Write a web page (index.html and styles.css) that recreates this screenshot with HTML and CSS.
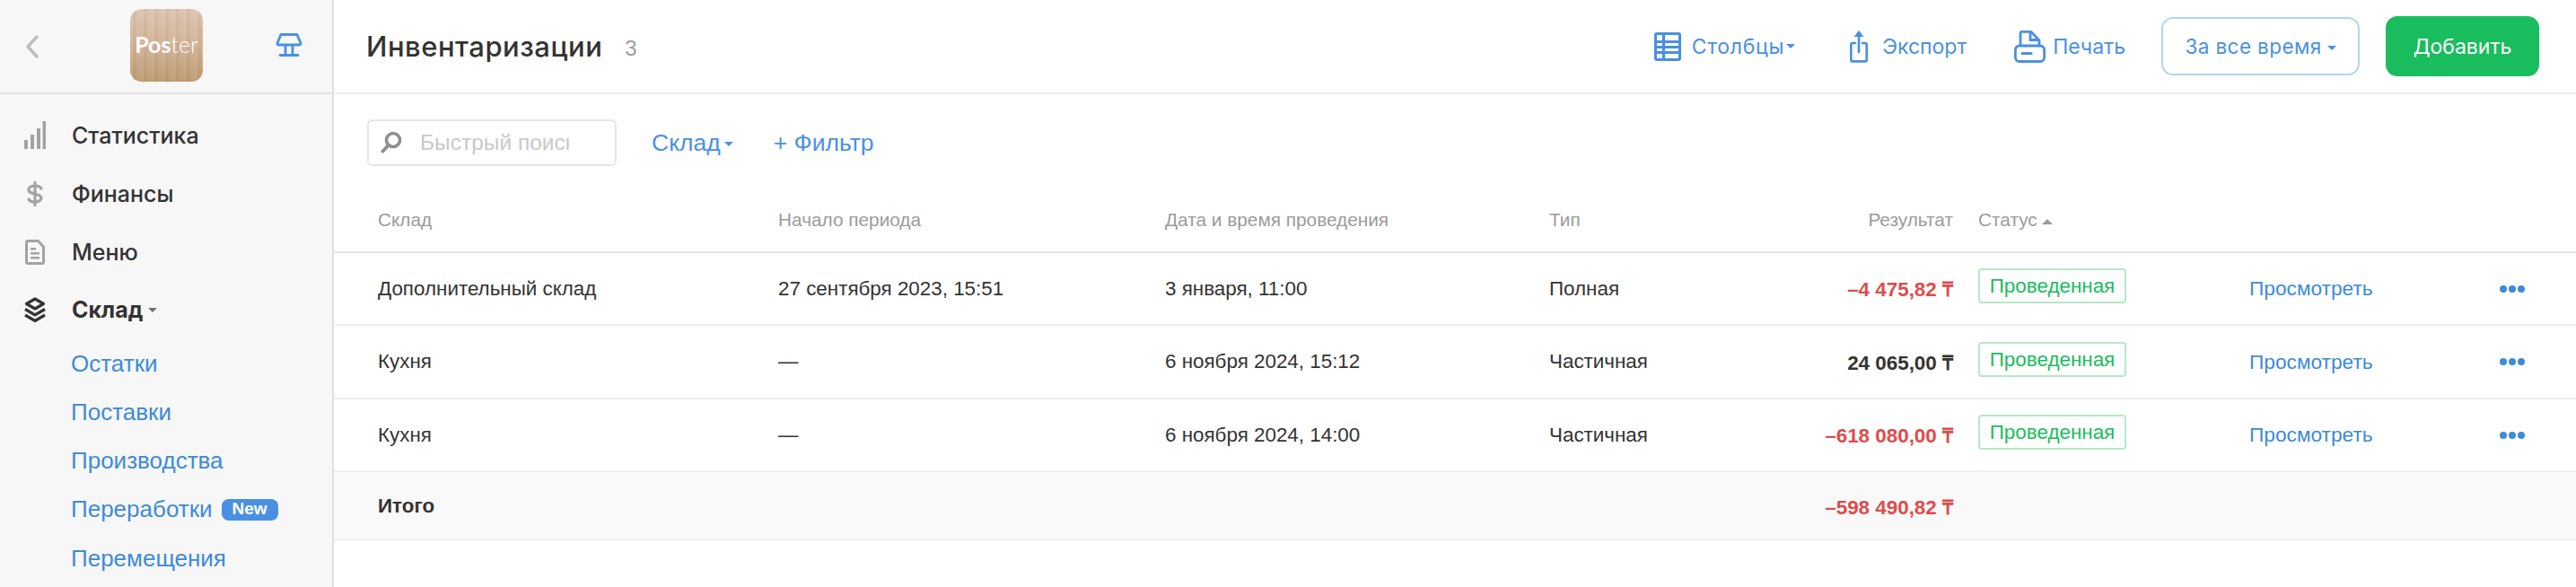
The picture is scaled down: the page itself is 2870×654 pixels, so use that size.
FILE: index.html
```html
<!DOCTYPE html>
<html lang="ru">
<head>
    <meta charset="UTF-8">
    <title>Инвентаризации</title>
    <link rel="stylesheet" href="styles.css">
</head>
<body>
    <div class="app">
        <!-- Sidebar -->
        <aside class="sidebar">
            <div class="brand">
                <svg class="back-icon" width="16" height="26" viewBox="0 0 16 26"><path d="M13 2 3 13l10 11" fill="none" stroke="#bdbdbd" stroke-width="3.4" stroke-linecap="round" stroke-linejoin="round"/></svg>
                <div class="logo"><b>Pos</b>ter</div>
                <svg class="pos-icon" width="30" height="26" viewBox="0 0 30 26"><path d="M6 1.500h18l4 9.500q.3 2-1.500 2H3.500q-1.800 0-1.500-2zM11 13v11M19 13v11M5 24.500h20" fill="none" stroke="#4a90e2" stroke-width="2.800" stroke-linejoin="round" stroke-linecap="round"/></svg>
            </div>
            <nav class="nav">
                <a class="nav-item">
                    <svg class="nav-icon" width="24" height="32" viewBox="0 0 24 32"><path d="M0 21h4v10H0zM7 15h4v16H7zM14 8h4v23h-4zM20.500 0h3.500v31h-3.500z" fill="#a3a3a3"/></svg>
                    Статистика
                </a>
                <a class="nav-item">
                    <svg class="nav-icon" width="24" height="28" viewBox="0 0 24 28"><path d="M19 8c-1-2-3.500-3-7-3-4 0-7 1.500-7 4.500S8 13 12 14s7 2 7 4.500-3 4.500-7 4.500c-3.500 0-6-1-7-3M12 1v26" fill="none" stroke="#a3a3a3" stroke-width="3.200" stroke-linecap="round"/></svg>
                    Финансы
                </a>
                <a class="nav-item">
                    <svg class="nav-icon" width="24" height="28" viewBox="0 0 24 28"><path d="M4 1.500h11.500l6 6.500v17q0 1.500-1.500 1.500H4q-1.500 0-1.500-1.500V3q0-1.500 1.500-1.500z" fill="none" stroke="#a3a3a3" stroke-width="3"/><path d="M7 9h6v2.600H7zM7 14h10v2.600H7zM7 19h10v2.600H7z" fill="#a3a3a3"/></svg>
                    Меню
                </a>
                <a class="nav-item nav-item-active">
                    <svg class="nav-icon" width="24" height="28" viewBox="0 0 24 28"><path d="M12 2 21.500 7.500 12 13 2.500 7.500z" fill="none" stroke="#333" stroke-width="3.200" stroke-linejoin="round"/><path d="M1 13.500 12 20l11-6.500M1 20l11 6.500L23 20" fill="none" stroke="#333" stroke-width="3.200"/></svg>
                    Склад<span class="caret caret-dark"></span>
                </a>
            </nav>
            <div class="subnav">
                <a>Остатки</a>
                <a>Поставки</a>
                <a>Производства</a>
                <a>Переработки<span class="badge-new">New</span></a>
                <a>Перемещения</a>
            </div>
        </aside>

        <!-- Main content -->
        <main class="content">
            <header class="topbar">
                <h1>Инвентаризации</h1>
                <span class="count">3</span>
                <div class="actions">
                    <a class="action action-columns">
                        <svg width="30" height="32" viewBox="0 0 30 32"><rect x="1.500" y="1.500" width="27" height="29" rx="1.500" fill="none" stroke="#4a90e2" stroke-width="3"/><path d="M1 10.500h28M1 16.500h28M1 22.500h28M10.500 1v30" stroke="#4a90e2" stroke-width="3.200" fill="none"/></svg>
                        <span class="action-label">Столбцы</span><span class="caret"></span>
                    </a>
                    <a class="action action-export">
                        <svg width="20" height="36" viewBox="0 0 20 36"><path d="M6 14H3q-1.700 0-1.700 1.700v17q0 1.700 1.700 1.700h14q1.700 0 1.700-1.700v-17Q18.700 14 17 14h-3M10 2v22" fill="none" stroke="#4a90e2" stroke-width="2.600" stroke-linecap="round"/><path d="M10 0l5.500 7h-11z" fill="#4a90e2"/></svg>
                        <span class="action-label">Экспорт</span>
                    </a>
                    <a class="action action-print">
                        <svg width="35" height="36" viewBox="0 0 35 36"><path d="M7 17V3q0-1.700 1.700-1.700h10L28 11v6" fill="none" stroke="#4a90e2" stroke-width="2.800" stroke-linejoin="round"/><path d="M18 2v8.500h9" fill="none" stroke="#4a90e2" stroke-width="2.800"/><rect x="1.400" y="17" width="32.200" height="17.500" rx="4.500" fill="none" stroke="#4a90e2" stroke-width="2.800"/><path d="M9 25.500h10" stroke="#4a90e2" stroke-width="3" stroke-linecap="round"/></svg>
                        <span class="action-label">Печать</span>
                    </a>
                    <button class="btn btn-period">За все время<span class="caret"></span></button>
                    <button class="btn btn-add">Добавить</button>
                </div>
            </header>

            <div class="toolbar">
                <div class="search">
                    <svg width="24" height="26" viewBox="0 0 24 26"><circle cx="14" cy="10" r="7.500" fill="none" stroke="#8f8f8f" stroke-width="3.600"/><path d="M8.500 16 2.500 22.500" stroke="#8f8f8f" stroke-width="4" stroke-linecap="round"/></svg>
                    <input type="text" placeholder="Быстрый поиск">
                </div>
                <a class="filter-link">Склад<span class="caret"></span></a>
                <a class="filter-link filter-add">+ Фильтр</a>
            </div>

            <table class="report">
                <colgroup>
                    <col class="col-store">
                    <col class="col-start">
                    <col class="col-date">
                    <col class="col-type">
                    <col class="col-result">
                    <col class="col-status">
                    <col class="col-view">
                    <col class="col-more">
                </colgroup>
                <thead>
                    <tr>
                        <th>Склад</th>
                        <th>Начало периода</th>
                        <th>Дата и время проведения</th>
                        <th>Тип</th>
                        <th class="num">Результат</th>
                        <th class="status-cell">Статус<span class="caret caret-up"></span></th>
                        <th></th>
                        <th></th>
                    </tr>
                </thead>
                <tbody>
                    <tr>
                        <td>Дополнительный склад</td>
                        <td>27 сентября 2023, 15:51</td>
                        <td>3 января, 11:00</td>
                        <td>Полная</td>
                        <td class="num negative">–4 475,82 ₸</td>
                        <td class="status-cell"><span class="status">Проведенная</span></td>
                        <td><a class="view-link">Просмотреть</a></td>
                        <td><span class="dots"><i></i><i></i><i></i></span></td>
                    </tr>
                    <tr>
                        <td>Кухня</td>
                        <td>—</td>
                        <td>6 ноября 2024, 15:12</td>
                        <td>Частичная</td>
                        <td class="num strong">24 065,00 ₸</td>
                        <td class="status-cell"><span class="status">Проведенная</span></td>
                        <td><a class="view-link">Просмотреть</a></td>
                        <td><span class="dots"><i></i><i></i><i></i></span></td>
                    </tr>
                    <tr>
                        <td>Кухня</td>
                        <td>—</td>
                        <td>6 ноября 2024, 14:00</td>
                        <td>Частичная</td>
                        <td class="num negative">–618 080,00 ₸</td>
                        <td class="status-cell"><span class="status">Проведенная</span></td>
                        <td><a class="view-link">Просмотреть</a></td>
                        <td><span class="dots"><i></i><i></i><i></i></span></td>
                    </tr>
                </tbody>
                <tfoot>
                    <tr>
                        <td>Итого</td>
                        <td></td>
                        <td></td>
                        <td></td>
                        <td class="num negative">–598 490,82 ₸</td>
                        <td></td>
                        <td></td>
                        <td></td>
                    </tr>
                </tfoot>
            </table>
        </main>
    </div>
</body>
</html>
```

FILE: styles.css
```css
/* General styles */
html, body {
    margin: 0;
    padding: 0;
    height: 100%;
    overflow: hidden;
    background-color: #fff;
}

body {
    font-family: "Liberation Sans", Arial, sans-serif;
    font-size: 22.4px;
    color: #333;
}

.app {
    display: flex;
    height: 654px;
}

/* Carets */
.caret {
    display: inline-block;
    width: 0;
    height: 0;
    margin-left: 4px;
    vertical-align: middle;
    border-left: 5px solid transparent;
    border-right: 5px solid transparent;
    border-top: 5px solid #4a90e2;
}

.caret-dark {
    margin-left: 6px;
    border-top-color: #707070;
}

.caret-up {
    margin-left: 5px;
    border-top: 0;
    border-bottom: 6px solid #9b9b9b;
    border-left-width: 6px;
    border-right-width: 6px;
}

/* Sidebar */
.sidebar {
    flex: 0 0 370px;
    background-color: #f7f7f7;
    border-right: 2px solid #e0e0e0;
    overflow: hidden;
}

.brand {
    display: flex;
    align-items: center;
    height: 103px;
    padding: 0 23px 0 28px;
    border-bottom: 2px solid #e2e2e2;
}

.back-icon {
    margin-right: 101px;
}

.logo {
    width: 81px;
    height: 81px;
    line-height: 79px;
    margin-top: -2px;
    border-radius: 13px;
    background:
        repeating-linear-gradient(90deg, rgba(255, 255, 255, 0.07) 0 3px, rgba(120, 80, 40, 0.05) 3px 7px, rgba(255, 255, 255, 0.04) 7px 12px),
        linear-gradient(180deg, #dcc4b0 0%, #d0b295 50%, #bd9a6f 100%);
    color: #fff;
    font-family: "Lato", sans-serif;
    font-size: 25px;
    font-weight: 300;
    text-align: center;
}

.logo b {
    font-weight: 700;
}

.pos-icon {
    margin-left: 81px;
    margin-top: -4px;
}

.nav {
    padding-top: 14px;
}

.nav-item {
    display: flex;
    align-items: center;
    height: 64.700px;
    padding-left: 27px;
    font-family: "Inter", sans-serif;
    font-size: 25px;
    font-weight: 500;
    color: #333;
}

.nav-icon {
    flex: 0 0 24px;
    margin-right: 29px;
}

.nav-item-active {
    font-weight: 700;
}

.subnav {
    padding-left: 79px;
}

.subnav a {
    display: block;
    height: 54.200px;
    line-height: 54px;
    font-size: 26px;
    color: #3d8bd9;
    white-space: nowrap;
}

.badge-new {
    display: inline-block;
    margin-left: 10px;
    padding: 0 12px;
    height: 24px;
    line-height: 22px;
    border-radius: 8px;
    background-color: #4a90e2;
    color: #fff;
    font-size: 19px;
    font-weight: 700;
    vertical-align: 3px;
}

/* Main */
.content {
    flex: 1;
    min-width: 0;
}

.topbar {
    display: flex;
    align-items: center;
    height: 103px;
    padding: 0 41px 0 36px;
    border-bottom: 2px solid #eee;
}

.topbar h1 {
    margin: 0;
    font-family: "Inter", sans-serif;
    font-size: 31px;
    font-weight: 500;
    letter-spacing: 0.5px;
    color: #333;
}

.count {
    margin-left: 25px;
    margin-top: 4px;
    font-size: 24px;
    color: #9b9b9b;
}

.actions {
    display: flex;
    align-items: center;
    margin-left: auto;
}

.action {
    display: flex;
    align-items: center;
    color: #4a90e2;
}

.action-label {
    margin-left: 12px;
    font-family: "Inter", sans-serif;
    font-size: 23px;
}

.action-columns .action-label {
    letter-spacing: 0.7px;
}

.action-columns .caret {
    margin-left: 2px;
}

.action-export {
    margin-left: 61px;
}

.action-export .action-label {
    margin-left: 16px;
}

.action-print {
    margin-left: 53px;
}

.action-print .action-label {
    margin-left: 8px;
}

.btn {
    font-family: "Inter", sans-serif;
    font-size: 23px;
    cursor: pointer;
    border-radius: 13px;
}

.btn-period {
    width: 221px;
    height: 65px;
    margin-left: 40px;
    border: 2px solid #b4d2f5;
    background-color: #fff;
    color: #4a90e2;
    font-size: 22.500px;
    letter-spacing: 0.4px;
}

.btn-period .caret {
    margin-left: 6px;
}

.btn-add {
    width: 171px;
    height: 67px;
    margin-left: 29px;
    border: none;
    background-color: #19bd5d;
    color: #fff;
}

.toolbar {
    display: flex;
    align-items: center;
    padding: 28px 0 25px 37px;
}

.search {
    display: flex;
    align-items: center;
    box-sizing: border-box;
    width: 278px;
    height: 52px;
    padding-left: 13px;
    border: 2px solid #e6e6e6;
    border-radius: 6px;
}

.search input {
    width: 166px;
    margin-left: 20px;
    padding: 0;
    border: none;
    outline: none;
    background: none;
    font-family: "Liberation Sans", Arial, sans-serif;
    font-size: 24.500px;
}

.search input::placeholder {
    color: #c8c8c8;
}

.filter-link {
    color: #4a90e2;
    font-size: 26.500px;
    margin-left: 39px;
}

.filter-add {
    margin-left: 45px;
}

/* Table */
.report {
    width: 2498px;
    table-layout: fixed;
    border-collapse: collapse;
}

.col-store { width: 495px; }
.col-start { width: 431px; }
.col-date { width: 428px; }
.col-type { width: 300px; }
.col-result { width: 150px; }
.col-status { width: 330px; }
.col-view { width: 279px; }
.col-more { width: 85px; }

.report th {
    height: 70px;
    padding: 0;
    border-bottom: 2px solid #e6e6e6;
    text-align: left;
    font-size: 20.800px;
    font-weight: 400;
    color: #9b9b9b;
}

.report td {
    height: 79px;
    padding: 0;
    border-bottom: 2px solid #eee;
    white-space: nowrap;
}

.report th:first-child,
.report td:first-child {
    padding-left: 49px;
}

.report tbody tr:nth-child(2) td {
    height: 80px;
}

.report tfoot td {
    height: 72px;
    padding-top: 2px;
    background-color: #f9f9f9;
    font-weight: 700;
}

.report .num {
    text-align: right;
}

.report .status-cell {
    padding-left: 28px;
}

.strong {
    font-weight: 700;
}

.report .negative {
    font-weight: 700;
    color: #dd4c4c;
}

.status {
    display: inline-block;
    box-sizing: border-box;
    width: 165px;
    height: 39px;
    margin-bottom: 6px;
    line-height: 35px;
    border: 2px solid #b5e8c6;
    border-radius: 4px;
    color: #19bd5d;
    text-align: center;
}

.view-link {
    color: #3d8bd9;
    font-size: 22.700px;
}

.dots {
    display: flex;
    gap: 2px;
}

.dots i {
    width: 8px;
    height: 8px;
    border-radius: 50%;
    background-color: #3d8bd9;
}
```
